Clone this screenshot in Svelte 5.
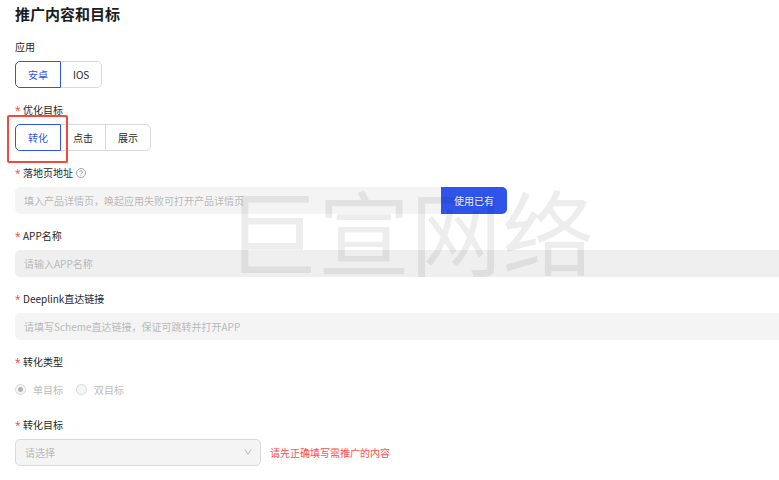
<script lang="ts">
	const platforms = ["安卓", "IOS"];
	const goals = ["转化", "点击", "展示"];

	let platform: string = $state("安卓");
	let goal: string = $state("转化");
	let landingUrl: string = $state("");
	let appName: string = $state("");
	let deeplink: string = $state("");
	let convertType: string = $state("single");
	let convertGoal: string = $state("");
</script>

<main class="page">
	<h1 class="title">推广内容和目标</h1>

	<form class="form" onsubmit={(e) => e.preventDefault()}>
		<div class="item" role="group" aria-labelledby="platform-label">
			<span class="label" id="platform-label">应用</span>
			<div class="segments">
				{#each platforms as name}
					<button
						type="button"
						class="segment"
						class:active={platform === name}
						aria-pressed={platform === name}
						onclick={() => (platform = name)}>{name}</button>
				{/each}
			</div>
		</div>

		<div class="item" role="group" aria-labelledby="goal-label">
			<span class="label required" id="goal-label">优化目标</span>
			<div class="segments marked">
				{#each goals as name}
					<button
						type="button"
						class="segment"
						class:active={goal === name}
						aria-pressed={goal === name}
						onclick={() => (goal = name)}>{name}</button>
				{/each}
			</div>
		</div>

		<div class="item">
			<label class="label required" for="landing">
				落地页地址
				<svg class="help" viewBox="0 0 20 20" aria-hidden="true">
					<circle cx="10" cy="10" r="9" />
					<path d="M7.2 8a2.8 2.6 0 1 1 4.3 2.2c-1 .6-1.5 1-1.5 2.2M10 13.9v1.6" />
				</svg>
			</label>
			<div class="input-row">
				<input
					id="landing"
					class="input"
					type="text"
					placeholder="填入产品详情页，唤起应用失败可打开产品详情页"
					bind:value={landingUrl} />
				<button type="button" class="btn">使用已有</button>
			</div>
		</div>

		<div class="item">
			<label class="label required" for="app-name">APP名称</label>
			<input
				id="app-name"
				class="input wide dark"
				type="text"
				placeholder="请输入APP名称"
				bind:value={appName} />
		</div>

		<div class="item">
			<label class="label required" for="deeplink">Deeplink直达链接</label>
			<input
				id="deeplink"
				class="input wide"
				type="text"
				placeholder="请填写Scheme直达链接，保证可跳转并打开APP"
				bind:value={deeplink} />
		</div>

		<div class="item" role="radiogroup" aria-labelledby="type-label">
			<span class="label required" id="type-label">转化类型</span>
			<div class="radios">
				<label class="radio">
					<input type="radio" value="single" bind:group={convertType} disabled />
					单目标
				</label>
				<label class="radio">
					<input type="radio" value="double" bind:group={convertType} disabled />
					双目标
				</label>
			</div>
		</div>

		<div class="item">
			<label class="label required" for="convert-goal">转化目标</label>
			<div class="select-row">
				<div class="select-box">
					<select id="convert-goal" class="select" bind:value={convertGoal} disabled>
						<option value="">请选择</option>
					</select>
					<svg class="arrow" viewBox="0 0 8 8" aria-hidden="true">
						<path d="M1 1.5 4 6.2 7 1.5" />
					</svg>
				</div>
				<span class="hint">请先正确填写需推广的内容</span>
			</div>
		</div>
	</form>

	<div class="watermark" aria-hidden="true">巨宣网络</div>
</main>

<style>
	:global(body) {
		background: #ffffff;
	}

	.page {
		position: relative;
		overflow: hidden;
		padding: 4px 0 13px 15px;
		font-family: "Noto Sans CJK SC", sans-serif;
		font-size: 10px;
		line-height: 16px;
		color: #262626;
	}

	.title {
		margin: 0 0 15px;
		font-size: 15px;
		line-height: 20px;
		font-weight: 700;
		color: #1c1c1c;
	}

	.form {
		display: flex;
		flex-direction: column;
		gap: 14px;
	}

	.item {
		display: flex;
		flex-direction: column;
		gap: 6px;
	}

	.label {
		display: flex;
		align-items: center;
		height: 16px;
	}

	.required::before {
		content: "*";
		width: 8px;
		font-family: "Open Sans", sans-serif;
		color: #ff3b3e;
	}

	.help {
		width: 10px;
		height: 10px;
		margin-left: 3px;
		fill: none;
		stroke: #8c8c8c;
		stroke-width: 1.6;
	}

	.segments {
		display: flex;
		position: relative;
	}

	.segment {
		box-sizing: border-box;
		height: 27px;
		padding: 0 12px;
		border: 1px solid #d9d9d9;
		background: #ffffff;
		font: inherit;
		color: #262626;
		cursor: pointer;
	}

	.segment + .segment {
		margin-left: -1px;
	}

	.segment:first-child {
		border-radius: 5px 0 0 5px;
	}

	.segment:last-child {
		border-radius: 0 5px 5px 0;
	}

	.segment.active {
		position: relative;
		border-color: #2f54eb;
		color: #2f54eb;
	}

	.marked::after {
		content: "";
		position: absolute;
		top: -9px;
		left: -8px;
		box-sizing: border-box;
		width: 61px;
		height: 48px;
		border: 2px solid #f04a3e;
		border-radius: 2px;
		pointer-events: none;
	}

	.input-row {
		display: flex;
		width: 492px;
		max-width: 100%;
	}

	.input {
		box-sizing: border-box;
		flex: 1;
		min-width: 0;
		height: 27px;
		padding: 0 9px;
		border: none;
		border-radius: 5px 0 0 5px;
		background: #f4f4f4;
		font: inherit;
		color: #262626;
		outline: none;
	}

	.input::placeholder {
		color: #b9b9b9;
	}

	.input.wide {
		flex: none;
		width: 100%;
	}

	.input.dark {
		background: #efefef;
	}

	.btn {
		height: 27px;
		padding: 0 13px;
		border: none;
		border-radius: 0 5px 5px 0;
		background: #2f54eb;
		font: inherit;
		color: #ffffff;
		cursor: pointer;
	}

	.radios {
		display: flex;
		align-items: center;
		gap: 13px;
		height: 27px;
	}

	.radio {
		display: flex;
		align-items: center;
		gap: 7px;
		color: #bcbcbc;
	}

	.radio input {
		appearance: none;
		box-sizing: border-box;
		width: 11px;
		height: 11px;
		margin: 0;
		border: 1px solid #d9d9d9;
		border-radius: 50%;
		background: #f5f5f5;
	}

	.radio input:checked {
		background: radial-gradient(circle, #b4b4b4 2px, #f5f5f5 3px);
	}

	.select-row {
		display: flex;
		align-items: center;
		gap: 9px;
	}

	.select-box {
		position: relative;
		width: 246px;
	}

	.select {
		display: block;
		appearance: none;
		box-sizing: border-box;
		width: 100%;
		height: 27px;
		padding: 0 9px;
		border: 1px solid #d9d9d9;
		border-radius: 5px;
		background: #f4f4f4;
		font: inherit;
		color: #b9b9b9;
		opacity: 1;
	}

	.arrow {
		position: absolute;
		top: 9px;
		right: 9px;
		width: 8px;
		height: 8px;
		fill: none;
		stroke: #b9b9b9;
		pointer-events: none;
	}

	.hint {
		color: #ff4d4f;
	}

	.watermark {
		position: absolute;
		top: 175px;
		left: 226px;
		font-family: "Noto Sans CJK SC", sans-serif;
		font-size: 92px;
		line-height: 108px;
		white-space: nowrap;
		color: rgba(0, 0, 0, 0.07);
		pointer-events: none;
	}
</style>
